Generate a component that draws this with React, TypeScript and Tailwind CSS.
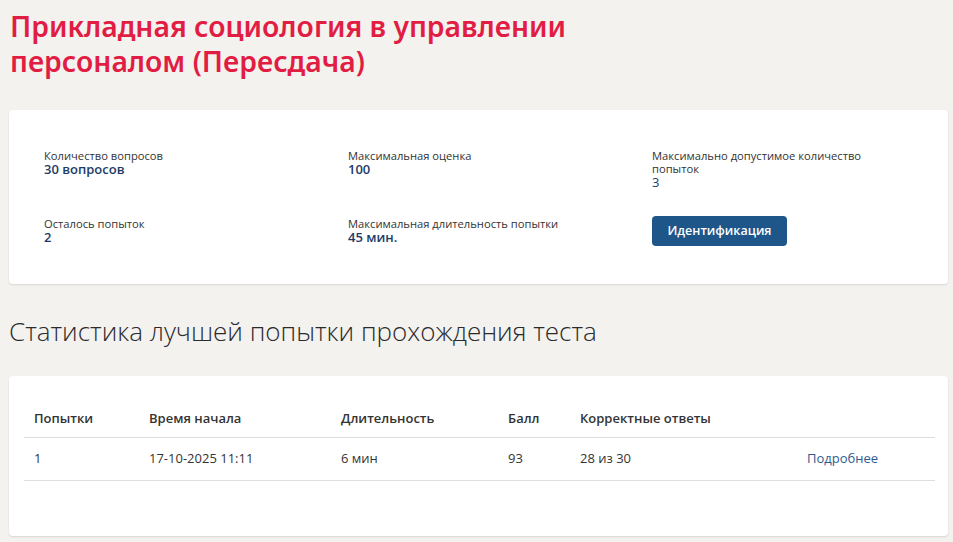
import React from "react";

const body = { fontFamily: '"Open Sans", "Noto Sans", sans-serif' };

function Info({ label, value }: { label: string; value: string }) {
  return (
    <div className="flex flex-col">
      <div className="text-[11.2px] leading-[13px] text-[#333333]">{label}</div>
      <div className="text-[13px] leading-[15px] font-semibold text-[#1d3b66]">{value}</div>
    </div>
  );
}

export default function App() {
  return (
    <div className="min-h-[542px] w-full bg-[#f3f2ef] pb-2" style={body}>
      <h1
        className="pl-[10px] pt-[9px] text-[28.3px] leading-[35px] font-semibold text-[#e21d43] w-[610px]"
        style={{ fontFamily: '"Noto Sans", sans-serif' }}
      >
        Прикладная социология в управлении персоналом (Пересдача)
      </h1>

      <div className="ml-[9px] mr-[5px] mt-[31px] rounded-[4px] bg-white shadow-[0_1px_2px_rgba(0,0,0,0.12)] pl-[35px] pr-[20px] pt-[39px] pb-[38px]">
        <div className="grid grid-cols-[304px_304px_1fr] gap-y-[27px]">
          <Info label="Количество вопросов" value="30 вопросов" />
          <Info label="Максимальная оценка" value="100" />
          <div className="flex flex-col w-[230px]">
            <div className="text-[11.2px] leading-[13px] text-[#333333]">
              Максимально допустимое количество попыток
            </div>
            <div className="text-[13px] leading-[15px] text-[#1d3b66]">3</div>
          </div>
          <Info label="Осталось попыток" value="2" />
          <Info label="Максимальная длительность попытки" value="45 мин." />
          <div className="-mt-[1px]">
            <button className="h-[30px] w-[135px] rounded-[4px] bg-[#1e5689] text-white text-[12.5px] font-semibold">
              Идентификация
            </button>
          </div>
        </div>
      </div>

      <h2
        className="pl-[9px] mt-[31px] text-[26px] leading-[32px] font-light text-[#2b2b2b]"
        style={{ fontFamily: '"Open Sans", sans-serif' }}
      >
        Статистика лучшей попытки прохождения теста
      </h2>

      <div className="ml-[9px] mr-[5px] mt-[29px] rounded-[4px] bg-white shadow-[0_1px_2px_rgba(0,0,0,0.12)] pl-[15px] pr-[13px] pt-[25px] pb-[55px]">
        <table className="w-full border-collapse text-[13px] text-[#333333]">
          <thead>
            <tr className="border-b border-[#dedede]">
              <th className="w-[115px] h-[36px] pl-[10px] text-left font-semibold">Попытки</th>
              <th className="w-[192px] pl-[10px] text-left font-semibold">Время начала</th>
              <th className="w-[167px] pl-[10px] text-left font-semibold">Длительность</th>
              <th className="w-[72px] pl-[10px] text-left font-semibold">Балл</th>
              <th className="w-[227px] pl-[10px] text-left font-semibold">Корректные ответы</th>
              <th className="pl-[10px] text-left font-semibold"></th>
            </tr>
          </thead>
          <tbody>
            <tr className="border-b border-[#dedede]">
              <td className="h-[43px] pl-[10px]">1</td>
              <td className="pl-[10px]">17-10-2025 11:11</td>
              <td className="pl-[10px]">6 мин</td>
              <td className="pl-[10px]">93</td>
              <td className="pl-[10px]">28 из 30</td>
              <td className="pl-[10px] text-[#2d5c8f]">Подробнее</td>
            </tr>
          </tbody>
        </table>
      </div>
    </div>
  );
}
